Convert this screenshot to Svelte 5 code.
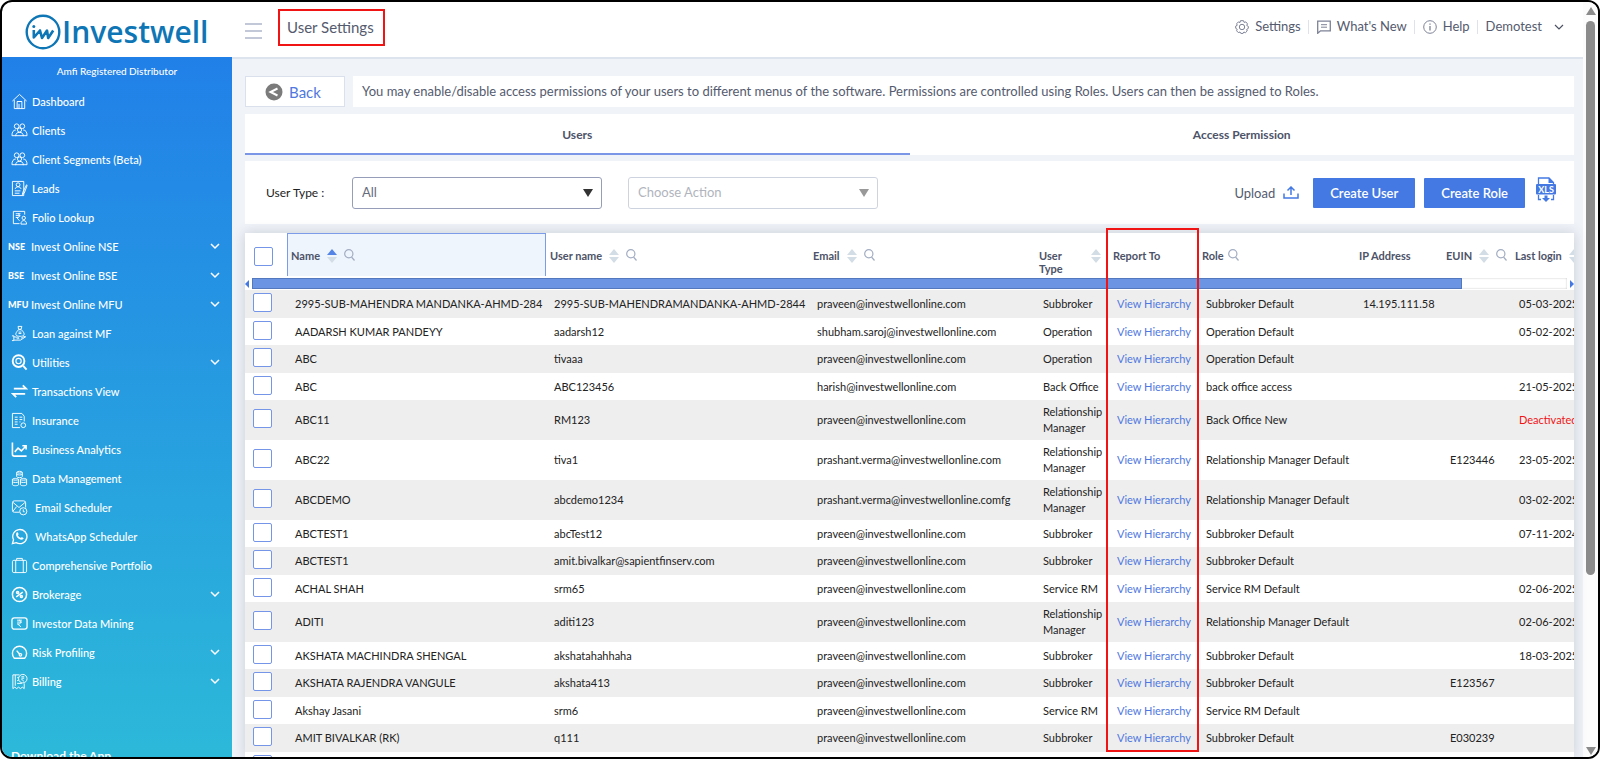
<script>
  let menuOpen = true;
  let activeTab = "users";
  let userType = "All";
  let action = "";

  // 18x18 line icons for the side menu
  const icons = {
    home: '<path d="M1.500 8.500 9 1.500l7.500 7M3.500 7.500V16.500h11V7.500M6.500 16.500V9h5v7.500M8.500 11.500v5M6.500 9h5"/>',
    people: '<circle cx="6" cy="4.500" r="2.500"/><circle cx="12" cy="4.500" r="2.500"/><circle cx="9" cy="8.500" r="2.200"/><path d="M1 14.500c0-4 1.500-6 4-6M17 14.500c0-4-1.500-6-4-6M5 15c0-3 1.500-4 4-4s4 1 4 4M1 14.500h16"/>',
    leads: '<path d="M1.500 1.500h12v15h-12zM4 11.500h6M4 14h5"/><circle cx="7.500" cy="5" r="2"/><path d="M4.500 9.500c0-3 6-3 6 0M16.500 5l-4 8-.5 2.500 2-1.500 3-8z"/>',
    folio: '<path d="M9 15.500H2.500v-13h12V6M5 5h5M5 7h5M5 9h2.500c2 0 2-4 0-4M6 9l3 3.500"/><circle cx="13.500" cy="9.500" r="1.800"/><path d="M10.500 16c0-5 6-5 6 0z"/>',
    loan: '<path d="M8 5c-5 5-3 7 1.500 7s6.500-2 1.500-7zM7.500 1.500h4l-.8 3H8zM8 7.500h3M8 9h3M1 11.500h2v5H1M3 12.500l4 .5c2 .5 2 1.500 0 1.500H6M3 16h7l5.500-3.500c-1-1-2 0-5 1.500"/>',
    search: '<g stroke-width="2"><circle cx="8" cy="7.500" r="6.200"/><circle cx="8" cy="7.500" r="2.800" stroke-width="1.200"/><path d="m13 12.500 3.500 4"/></g>',
    swap: '<path stroke-width="1.900" d="M3 6h13l-3.500-3.500M15 11.500H2l3.500 3.500"/>',
    insurance: '<path d="M9.500 16.500h-8v-15h10l2.500 3V10M4 5.500h3M9 5.500h3M4 8h3M9 8h3M4 10.500h3M9 10.500h1M4 13h3"/><circle cx="13" cy="14" r="2.500"/>',
    chart: '<path stroke-width="1.700" d="M1.500 1.500V14a2 2 0 0 0 2 2h13M4 11.500l3.500-4 3.500 3 5-5.500M12 5h4v4"/>',
    data: '<path d="M6 2.500c0-1.500 6-1.500 6 0V7c0 1.500-6 1.500-6 0zM6 4.500c1 1 5 1 6 0M1.500 10c0-1.500 6.500-1.500 6.500 0v5.500c0 1.500-6.500 1.500-6.500 0zM1.500 12.500c1 1 5.500 1 6.500 0M10 10c0-1.500 6.500-1.500 6.500 0v5.500c0 1.500-6.500 1.500-6.500 0zM10 12.500c1 1 5.500 1 6.500 0M1.500 10c1 1 5.500 1 6.500 0M10 10c1 1 5.500 1 6.500 0M6 2.500c1 1 5 1 6 0"/>',
    mail: '<path d="M9 14H3.500a2 2 0 0 1-2-2V4a2 2 0 0 1 2-2h10a2 2 0 0 1 2 2v5M2 3.500l6.500 5.500L15 3.500M2 13l4-5"/><circle cx="13" cy="13" r="3.800"/><path d="M13 11v2.500h1.500"/>',
    whatsapp: '<path stroke-width="1.400" d="M1.500 16.500l1.200-4A7.500 7.500 0 1 1 5.500 15.500z"/><path fill="#fff" stroke="none" d="M6 4.800c.8-.6 1.300-.2 2 1.600.2.700-.8 1-.6 1.500.6 1.200 1.500 2 2.700 2.500.600.200 1-.9 1.600-.7 1.800.9 2 1.200 1.300 2-1.200 1.400-3 .9-4.700-.2C6 10 4.500 7 6 4.800z"/>',
    portfolio: '<path d="M3 3.500h12a1.500 1.500 0 0 1 1.500 1.500v10a1.500 1.500 0 0 1-1.500 1.500H3A1.500 1.500 0 0 1 1.500 15V5A1.500 1.500 0 0 1 3 3.500zM6 3.500v-2h6v2M5 3.500v13M13 3.500v13"/>',
    percent: '<g stroke-width="1.600"><circle cx="9" cy="9" r="7.500"/><path d="m12.500 6.500-7 5"/><circle cx="7" cy="6.800" r="1.100"/><circle cx="11" cy="11.200" r="1.100"/></g>',
    mining: '<rect x="1" y="3" width="16" height="12" rx="2.500" stroke-width="1.400"/><path d="M6.500 5.500h5M6.500 7.500h5M6.500 9.500h2c2.500 0 2.500-4 0-4M7 9.500l3.500 3"/>',
    risk: '<path stroke-width="1.500" d="M3.500 15A7.500 7.500 0 1 1 14.500 15zM6 7l3 3.500"/><circle cx="10" cy="11.500" r="1.300" stroke-width="1.300"/>',
    billing: '<path d="M9 2H2v14.500l2-1.500 2 1.500L8 15l2 1.500 2-1.500 2 1.500V11M4.500 2v11.500M6.500 5H8M6.500 8H8M6.500 11h5"/><circle cx="12.500" cy="6" r="4.500"/><path d="M11 4h3M11 5.500h3M11 7h1l1.500 2"/>',
  };

  const menu = [
    { label: "Dashboard", icon: "home" },
    { label: "Clients", icon: "people" },
    { label: "Client Segments (Beta)", icon: "people" },
    { label: "Leads", icon: "leads" },
    { label: "Folio Lookup", icon: "folio" },
    { label: "Invest Online NSE", mark: "NSE", sub: true },
    { label: "Invest Online BSE", mark: "BSE", sub: true },
    { label: "Invest Online MFU", mark: "MFU", sub: true },
    { label: "Loan against MF", icon: "loan" },
    { label: "Utilities", icon: "search", sub: true },
    { label: "Transactions View", icon: "swap" },
    { label: "Insurance", icon: "insurance" },
    { label: "Business Analytics", icon: "chart" },
    { label: "Data Management", icon: "data" },
    { label: "Email Scheduler", icon: "mail", wide: true },
    { label: "WhatsApp Scheduler", icon: "whatsapp", wide: true },
    { label: "Comprehensive Portfolio", icon: "portfolio" },
    { label: "Brokerage", icon: "percent", sub: true },
    { label: "Investor Data Mining", icon: "mining" },
    { label: "Risk Profiling", icon: "risk", sub: true },
    { label: "Billing", icon: "billing", sub: true },
  ];

  const columns = [
    { label: "Name", width: 259, sort: "asc", search: true },
    { label: "User name", width: 263, sort: "none", search: true },
    { label: "Email", width: 226, sort: "none", search: true },
    { label: "User Type", width: 74, sort: "none", split: true },
    { label: "Report To", width: 89 },
    { label: "Role", width: 157, search: true },
    { label: "IP Address", width: 87 },
    { label: "EUIN", width: 69, sort: "none", search: true },
    { label: "Last login", width: 140, sort: "none" },
  ];

  const rows = [
    ["2995-SUB-MAHENDRA MANDANKA-AHMD-284", "2995-SUB-MAHENDRAMANDANKA-AHMD-2844", "praveen@investwellonline.com", "Subbroker", "Subbroker Default", "14.195.111.58", "", "05-03-2025"],
    ["AADARSH KUMAR PANDEYY", "aadarsh12", "shubham.saroj@investwellonline.com", "Operation", "Operation Default", "", "", "05-02-2025"],
    ["ABC", "tivaaa", "praveen@investwellonline.com", "Operation", "Operation Default", "", "", ""],
    ["ABC", "ABC123456", "harish@investwellonline.com", "Back Office", "back office access", "", "", "21-05-2025"],
    ["ABC11", "RM123", "praveen@investwellonline.com", "Relationship Manager", "Back Office New", "", "", "Deactivated"],
    ["ABC22", "tiva1", "prashant.verma@investwellonline.com", "Relationship Manager", "Relationship Manager Default", "", "E123446", "23-05-2025"],
    ["ABCDEMO", "abcdemo1234", "prashant.verma@investwellonline.comfg", "Relationship Manager", "Relationship Manager Default", "", "", "03-02-2025"],
    ["ABCTEST1", "abcTest12", "praveen@investwellonline.com", "Subbroker", "Subbroker Default", "", "", "07-11-2024"],
    ["ABCTEST1", "amit.bivalkar@sapientfinserv.com", "praveen@investwellonline.com", "Subbroker", "Subbroker Default", "", "", ""],
    ["ACHAL SHAH", "srm65", "praveen@investwellonline.com", "Service RM", "Service RM Default", "", "", "02-06-2025"],
    ["ADITI", "aditi123", "praveen@investwellonline.com", "Relationship Manager", "Relationship Manager Default", "", "", "02-06-2025"],
    ["AKSHATA MACHINDRA SHENGAL", "akshatahahhaha", "praveen@investwellonline.com", "Subbroker", "Subbroker Default", "", "", "18-03-2025"],
    ["AKSHATA RAJENDRA VANGULE", "akshata413", "praveen@investwellonline.com", "Subbroker", "Subbroker Default", "", "E123567", ""],
    ["Akshay Jasani", "srm6", "praveen@investwellonline.com", "Service RM", "Service RM Default", "", "", ""],
    ["AMIT BIVALKAR (RK)", "q111", "praveen@investwellonline.com", "Subbroker", "Subbroker Default", "", "E030239", ""],
    ["", "", "", "", "", "", "", ""],
  ];
</script>

{#snippet cols()}
  <colgroup>
    <col style="width: 42px" />
    {#each columns as col}
      <col style="width: {col.width}px" />
    {/each}
  </colgroup>
{/snippet}

<div class="frame">
  <div class="page">
    <header class="topbar">
      <a class="logo" href="#home" aria-label="Investwell">
        <svg width="36" height="36" viewBox="0 0 36 36" fill="none" stroke="#0f76b6">
          <circle cx="18" cy="18" r="16.300" stroke-width="2.400" />
          <path d="M8.800 16v7.500L15 16.500l2 7.500 5-7.500 1.200 7.500 5-7.500" stroke-width="2.600" stroke-linejoin="round" />
          <circle cx="8.800" cy="12.500" r="1.500" fill="#0f76b6" stroke="none" />
        </svg>
        <span>Investwell</span>
      </a>
      <button class="burger" aria-label="Toggle menu" on:click={() => (menuOpen = !menuOpen)}>
        <i></i><i></i><i></i>
      </button>
      <h1>User Settings</h1>
      <nav class="tools">
        <a href="#settings">
          <svg width="14" height="14" viewBox="0 0 14 14" fill="none" stroke="#7d8296">
            <path d="M5.500.700h3l.6 1.700 1.700-.5 1.700 2-.8 1.500 1.600 1v2l-1.600 1 .5 1.600-1.800 1.700-1.500-.7-.8 1.400H5.800L5 12l-1.700.6-1.700-1.800.6-1.500-1.500-1V6.100l1.500-.8-.5-1.600 1.700-1.800 1.600.6z" />
            <circle cx="7" cy="7" r="2.700" />
          </svg>
          Settings
        </a>
        <a href="#news">
          <svg width="14" height="14" viewBox="0 0 14 14" fill="none" stroke="#7d8296">
            <path d="M.700 1.200h12.600v9.600H3.500L.700 13.300z" stroke-width="1.300" />
            <path d="M4 4.700h6M4 7.200h6" />
          </svg>
          What's New
        </a>
        <a href="#help">
          <svg width="14" height="14" viewBox="0 0 14 14" fill="none" stroke="#7d8296">
            <circle cx="7" cy="7" r="6.300" />
            <path d="M7 6v4.500M7 3.500v1.300" stroke-width="1.300" />
          </svg>
          Help
        </a>
        <button class="account">
          Demotest
          <svg width="10" height="6" viewBox="0 0 10 6" fill="none" stroke="#4c5163" stroke-width="1.200"><path d="m1 1 4 4 4-4" /></svg>
        </button>
      </nav>
    </header>

    <div class="body">
      {#if menuOpen}
        <aside>
          <p class="arn">Amfi Registered Distributor</p>
          <ul>
            {#each menu as item}
              <li>
                <a href="#menu" class:wide={item.wide} class:marked={item.mark}>
                  {#if item.mark}
                    <b class="mark">{item.mark}</b>
                  {:else}
                    <svg class="icon" viewBox="0 0 18 18" fill="none" stroke="#fff" stroke-width="1">{@html icons[item.icon]}</svg>
                  {/if}
                  <span>{item.label}</span>
                  {#if item.sub}
                    <svg class="chevron" width="10" height="7" viewBox="0 0 10 7" fill="none" stroke="#fff" stroke-width="1.500"><path d="m1 1 4 4 4-4" /></svg>
                  {/if}
                </a>
              </li>
            {/each}
          </ul>
          <p class="download">Download the App</p>
        </aside>
      {/if}

      <main>
        <div class="intro">
          <button class="back">
            <svg width="18" height="18" viewBox="0 0 18 18" fill="none">
              <circle cx="9" cy="9" r="8.500" fill="#7b7b7b" />
              <path d="M12.500 5.500 5.500 9l7 3.500" stroke="#fff" stroke-width="2" />
            </svg>
            Back
          </button>
          <p>You may enable/disable access permissions of your users to different menus of the software. Permissions are controlled using Roles. Users can then be assigned to Roles.</p>
        </div>

        <div class="tabs">
          <button class:active={activeTab === "users"} on:click={() => (activeTab = "users")}>Users</button>
          <button class:active={activeTab === "access"} on:click={() => (activeTab = "access")}>Access Permission</button>
        </div>

        <div class="filters">
          <label for="user-type">User Type :</label>
          <div class="select">
            <select id="user-type" bind:value={userType}>
              <option>All</option>
              <option>Subbroker</option>
              <option>Operation</option>
            </select>
          </div>
          <div class="select muted">
            <select bind:value={action} aria-label="Choose Action">
              <option value="">Choose Action</option>
            </select>
          </div>
          <button class="upload">
            Upload
            <svg width="16" height="13" viewBox="0 0 16 13" fill="none" stroke="#4479e3" stroke-width="1.500">
              <path d="M1 7.500V12h14V7.500M8 9V1.500M4.500 4.500 8 1l3.500 3.500" />
            </svg>
          </button>
          <button class="primary">Create User</button>
          <button class="primary">Create Role</button>
          <button class="xls" aria-label="Export XLS">
            <svg width="20" height="26" viewBox="0 0 20 26">
              <path d="M2.500 7V1H13l4.500 4.500V7M2.500 18v4.500H5M17.500 18v4.500H15" fill="none" stroke="#4479e3" stroke-width="1.300" />
              <path d="M12.500.500 18 6h-5.500zM8.500 18.500h3v2.500h2.500L10 25l-4-4h2.500z" fill="#4479e3" />
              <rect y="7" width="20" height="10.500" rx="1" fill="#4479e3" />
              <text x="10" y="15.500" text-anchor="middle" font-size="9" font-weight="700" fill="#fff">XLS</text>
            </svg>
          </button>
        </div>

        <div class="grid">
          <div class="clip">
            <table class="head">
              {@render cols()}
              <thead>
                <tr>
                  <th><input type="checkbox" aria-label="Select all" /></th>
                  {#each columns as col}
                    <th class:sorted={col.sort === "asc"}>
                      <div class="th" class:split={col.split} class:tight={!col.sort}>
                        <span>{col.label}</span>
                        {#if col.sort}
                          <svg width="10" height="14" viewBox="0 0 10 14">
                            <path d="m5 0 5 6H0z" fill={col.sort === "asc" ? "#5484e6" : "#d3dde5"} />
                            <path d="M0 8h10l-5 6z" fill="#d3dde5" />
                          </svg>
                        {/if}
                        {#if col.search}
                          <svg width="11" height="12" viewBox="0 0 11 12" fill="none" stroke="#a3adc2" stroke-width="1.200">
                            <circle cx="4.800" cy="4.800" r="4.100" /><path d="m7.500 8 3 3.500" />
                          </svg>
                        {/if}
                      </div>
                    </th>
                  {/each}
                </tr>
              </thead>
            </table>
            <div class="hscroll">
              <i class="left"></i>
              <div class="track"><div class="thumb"></div></div>
              <i class="right"></i>
            </div>
            <table class="rows">
              {@render cols()}
              <tbody>
                {#each rows as [name, login, email, type, role, ip, euin, last]}
                  <tr>
                    <td><input type="checkbox" aria-label="Select {name}" /></td>
                    <td>{name}</td>
                    <td>{login}</td>
                    <td>{email}</td>
                    <td class="type">{type}</td>
                    <td>{#if name}<a href="#hierarchy">View Hierarchy</a>{/if}</td>
                    <td>{role}</td>
                    <td>{ip}</td>
                    <td>{euin}</td>
                    <td class:off={last === "Deactivated"}>{last}</td>
                  </tr>
                {/each}
              </tbody>
            </table>
          </div>
          <div class="highlight"></div>
        </div>
      </main>
    </div>
  </div>
  <div class="vscroll">
    <i class="up"></i>
    <div class="bar"></div>
    <i class="down"></i>
  </div>
</div>

<style>
  :global(body) {
    margin: 0;
    background: #fff;
  }

  .frame {
    box-sizing: border-box;
    display: flex;
    height: 100vh;
    overflow: hidden;
    border: 2px solid #000;
    border-radius: 12px;
    background: #fff;
    font-family: Lato, "Liberation Sans", sans-serif;
    font-size: 11px;
    color: #555b6e;
  }

  .page {
    flex: 1;
    min-width: 0;
    display: flex;
    flex-direction: column;
  }

  button {
    font: inherit;
    color: inherit;
    border: none;
    background: none;
    padding: 0;
    cursor: pointer;
  }

  a {
    color: inherit;
    text-decoration: none;
  }

  p,
  h1,
  ul {
    margin: 0;
    padding: 0;
    list-style: none;
  }

  /* top bar */
  .topbar {
    display: flex;
    align-items: center;
    height: 55px;
    border-bottom: 2px solid #dee4ed;
    flex-shrink: 0;
  }

  .logo {
    box-sizing: border-box;
    display: flex;
    align-items: center;
    gap: 1px;
    width: 243px;
    padding: 4px 0 0 23px;
    color: #0f76b6;
    font-family: "Open Sans", Lato, sans-serif;
    font-size: 30px;
    font-weight: 600;
    line-height: 36px;
  }

  .burger {
    display: flex;
    flex-direction: column;
    gap: 5px;
    width: 17px;
    margin-right: 16px;
    padding-top: 3px;
  }

  .burger i {
    height: 2px;
    background: #c3c8d8;
  }

  h1 {
    border: 2px solid #f01414;
    padding: 0 9px 0 7px;
    font-size: 15px;
    font-weight: 400;
    line-height: 33px;
    margin-bottom: 4px;
  }

  .tools {
    display: flex;
    align-items: center;
    margin: 0 19px 6px auto;
    font-size: 13px;
    line-height: 13px;
  }

  .tools a {
    display: flex;
    align-items: center;
    gap: 6px;
    padding: 0 7px 0 8px;
    border-right: 1px solid #dfe2ea;
  }

  .account {
    display: flex;
    align-items: center;
    gap: 12px;
    padding-left: 8px;
  }

  .body {
    flex: 1;
    min-height: 0;
    display: flex;
  }

  /* side menu, covers the header's bottom line */
  aside {
    width: 230px;
    margin-top: -2px;
    flex-shrink: 0;
    overflow: hidden;
    color: #fff;
    background: linear-gradient(#2180e8, #2cb9d9);
    font-weight: 500;
  }

  .arn {
    padding: 6px 0 8px;
    font-size: 10px;
    line-height: 16px;
    text-align: center;
  }

  aside li a {
    display: flex;
    align-items: center;
    gap: 4px;
    height: 29px;
    padding: 0 12px 0 9px;
  }

  aside li a.wide {
    gap: 7px;
  }

  aside li a.marked {
    padding-left: 6px;
  }

  .icon {
    width: 17px;
    height: 17px;
  }

  .mark {
    width: 19px;
    font-size: 9px;
    font-weight: 900;
  }

  .chevron {
    margin-left: auto;
  }

  .download {
    margin-top: 51px;
    padding-left: 9px;
    font-size: 12px;
    font-weight: 700;
    line-height: 18px;
  }

  /* content */
  main {
    flex: 1;
    min-width: 0;
    display: flex;
    flex-direction: column;
    padding: 17px 9px 0 13px;
    background: #f0f3f8;
  }

  .intro {
    display: flex;
    gap: 8px;
    height: 31px;
    margin-bottom: 7px;
  }

  .back {
    display: flex;
    align-items: center;
    justify-content: center;
    gap: 6px;
    width: 100px;
    padding-right: 4px;
    border: 1px solid #dbe1ec;
    background: #fff;
    color: #4f78e0;
    font-size: 15px;
  }

  .intro p {
    flex: 1;
    padding-left: 9px;
    background: #fff;
    font-size: 13px;
    line-height: 30px;
  }

  .tabs {
    display: flex;
    height: 41px;
    margin-bottom: 6px;
    background: #fff;
  }

  .tabs button {
    flex: 1;
    padding-top: 2px;
    border-bottom: 2px solid transparent;
    font-size: 12px;
    font-weight: 700;
    color: #4d5368;
  }

  .tabs button.active {
    border-color: #7b96e6;
  }

  .filters {
    display: flex;
    align-items: center;
    height: 63px;
    margin-bottom: 9px;
    padding: 0 18px 0 21px;
    background: #fff;
    font-size: 13px;
  }

  .filters label {
    width: 86px;
    color: #222;
    font-size: 12px;
  }

  .select {
    position: relative;
    width: 250px;
    margin-right: 26px;
  }

  .select::after {
    content: "";
    position: absolute;
    right: 9px;
    top: 12px;
    border: 5px solid transparent;
    border-top: 8px solid #333;
    border-bottom: none;
    pointer-events: none;
  }

  select {
    appearance: none;
    width: 100%;
    height: 32px;
    padding: 0 9px 2px;
    border: 1px solid #969db8;
    border-radius: 3px;
    background: #fff;
    color: #676c7c;
    font: inherit;
  }

  .muted select {
    border-color: #ced3e0;
    color: #b1b4bd;
  }

  .muted::after {
    border-top-color: #999;
  }

  .upload {
    display: flex;
    align-items: center;
    gap: 8px;
    margin-left: auto;
    margin-right: 14px;
  }

  .primary {
    height: 30px;
    margin-right: 9px;
    padding: 0 17px;
    border-radius: 1px;
    background: #4479e3;
    color: #fff;
    font-weight: 600;
  }

  .xls {
    display: flex;
    margin: 0 0 5px 2px;
  }

  /* user grid */
  .grid {
    flex: 1;
    min-height: 0;
    position: relative;
    background: #fff;
    box-shadow: 0 0 12px rgba(70, 85, 110, 0.24);
  }

  .clip {
    height: 100%;
    overflow: hidden;
  }

  table {
    width: 1406px;
    table-layout: fixed;
    border-collapse: separate;
    border-spacing: 0;
  }

  th,
  td {
    box-sizing: border-box;
    text-align: left;
    white-space: nowrap;
  }

  th {
    height: 43px;
    padding: 16px 4px 0;
    vertical-align: top;
    font-weight: 700;
    line-height: 13px;
    color: #4d5368;
  }

  th:first-child {
    padding: 14px 0 0 9px;
  }

  th.sorted {
    padding: 15px 3px 0;
    border: 1px solid #7c9ce9;
    border-bottom: none;
    background: #eef5fd;
  }

  .th {
    display: flex;
    gap: 7px;
  }

  .th svg {
    flex-shrink: 0;
  }

  .th.tight {
    gap: 4px;
  }

  .split {
    justify-content: space-between;
    white-space: normal;
    padding-right: 4px;
  }

  .split span {
    width: 30px;
  }

  input[type="checkbox"] {
    appearance: none;
    display: block;
    box-sizing: border-box;
    width: 19px;
    height: 19px;
    margin: 0;
    border: 1px solid #7595e8;
    border-radius: 2px;
    background: #fff;
  }

  td {
    height: 27px;
    padding: 4px 8px;
    line-height: 16px;
    color: #222;
  }

  td:first-child {
    padding: 0 8px 3px;
  }

  td.type {
    padding-right: 0;
    white-space: normal;
  }

  tr:nth-child(odd) td {
    height: 28px;
  }

  .rows tr:nth-child(odd) {
    background: #eee;
  }

  td a {
    color: #4f78e0;
  }

  td.off {
    color: #f01414;
  }

  .hscroll {
    display: flex;
    align-items: center;
    height: 11px;
    padding: 2px 0 1px;
  }

  .hscroll i {
    border: 4px solid transparent;
  }

  .hscroll .left {
    border-left: none;
    border-right-color: #4479e3;
    margin-right: 3px;
  }

  .hscroll .right {
    border-right: none;
    border-left-color: #4479e3;
    margin-left: 3px;
  }

  .track {
    flex: 1;
    background: #fff;
    box-shadow: inset 0 0 2px #bbb;
  }

  .thumb {
    box-sizing: border-box;
    width: 92%;
    height: 11px;
    border: 1px solid #5378bd;
    background: #6b95e3;
  }

  .highlight {
    position: absolute;
    left: 861px;
    top: -5px;
    bottom: 5px;
    width: 89px;
    border: 2px solid #f01414;
    pointer-events: none;
  }

  /* page scrollbar */
  .vscroll {
    display: flex;
    flex-direction: column;
    align-items: center;
    width: 15px;
    padding: 5px 0 2px;
    box-sizing: border-box;
    background: #fcfcfc;
  }

  .vscroll i {
    border: 5px solid transparent;
  }

  .vscroll .up {
    border-top: none;
    border-bottom: 8px solid #8b8b8b;
  }

  .vscroll .down {
    margin-top: auto;
    border-bottom: none;
    border-top: 8px solid #8b8b8b;
  }

  .bar {
    width: 9px;
    height: 74%;
    margin-top: 6px;
    border-radius: 5px;
    background: #8b8b8b;
  }
</style>
